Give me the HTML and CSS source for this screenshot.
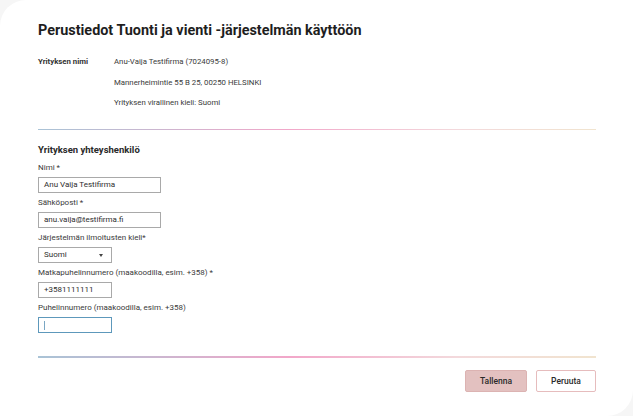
FILE: index.html
```html
<!DOCTYPE html>
<html lang="fi">
<head>
<meta charset="utf-8">
<link rel="stylesheet" href="styles.css">
</head>
<body>
<main class="card">
  <h1 class="title">Perustiedot Tuonti ja vienti -järjestelmän käyttöön</h1>
  <dl class="info">
    <dt class="info-label">Yrityksen nimi</dt>
    <dd class="info-value">Anu-Vaija Testifirma (7024095-8)</dd>
    <dd class="info-value">Mannerheimintie 55 B 25, 00250 HELSINKI</dd>
    <dd class="info-value">Yrityksen virallinen kieli: Suomi</dd>
  </dl>
  <hr class="divider divider-top">
  <h2 class="section-title">Yrityksen yhteyshenkilö</h2>
  <div class="field">
    <label class="label">Nimi *</label>
    <div class="input wide">Anu Vaija Testifirma</div>
  </div>
  <div class="field">
    <label class="label">Sähköposti *</label>
    <div class="input wide">anu.vaija@testifirma.fi</div>
  </div>
  <div class="field">
    <label class="label">Järjestelmän ilmoitusten kieli*</label>
    <div class="input select"><span>Suomi</span><span class="arrow"></span></div>
  </div>
  <div class="field">
    <label class="label">Matkapuhelinnumero (maakoodilla, esim. +358) *</label>
    <div class="input narrow">+3581111111</div>
  </div>
  <div class="field">
    <label class="label">Puhelinnumero (maakoodilla, esim. +358)</label>
    <div class="input narrow focused"><span class="caret"></span></div>
  </div>
  <hr class="divider divider-bottom">
  <div class="actions">
    <button class="btn btn-primary">Tallenna</button>
    <button class="btn btn-secondary">Peruuta</button>
  </div>
</main>
</body>
</html>
```
FILE: styles.css
```css
html, body {
  margin: 0;
  padding: 0;
  height: 100%;
}
body {
  background: #f6f6f6;
  font-family: Roboto, "Liberation Sans", Arial, sans-serif;
  color: #333;
}
.card {
  box-sizing: border-box;
  min-height: 100%;
  background: #fff;
  border-radius: 26px 0 26px 0;
  padding: 21px 37px 0 38px;
}
.title {
  margin: 0;
  font-size: 14.4px;
  line-height: 20px;
  font-weight: 700;
  color: #1e1e1e;
}
.info {
  display: grid;
  grid-template-columns: 76px 1fr;
  margin: 11px 0 0;
  font-size: 7.8px;
  line-height: 20.5px;
}
.info-label {
  grid-column: 1;
  grid-row: 1;
  font-weight: 700;
  color: #333;
}
.info-value {
  grid-column: 2;
  margin: 0;
  color: #3a3a3a;
}
.divider {
  border: 0;
  height: 1.5px;
  margin: 0;
  background: linear-gradient(90deg, #a9c3d6 0%, #f2a7c9 45%, #f3d9dc 75%, #f1e4cf 100%);
}
.divider-top {
  margin-top: 15px;
}
.section-title {
  margin: 14px 0 0;
  font-size: 9.5px;
  line-height: 12px;
  font-weight: 700;
  color: #2a2a2a;
}
.field {
  display: flex;
  flex-direction: column;
  align-items: flex-start;
  gap: 4px;
  margin-top: 7px;
}
.field + .field {
  margin-top: 5px;
}
.label {
  font-size: 8px;
  line-height: 10px;
  color: #3a3a3a;
}
.input {
  box-sizing: border-box;
  height: 16px;
  border: 1px solid #a9a9a9;
  padding: 0 5px;
  font-size: 8px;
  line-height: 14px;
  color: #2e2e2e;
  display: flex;
  align-items: center;
}
.wide { width: 123px; }
.narrow { width: 74px; }
.select {
  width: 74px;
  justify-content: space-between;
  padding-right: 8px;
}
.arrow {
  width: 0;
  height: 0;
  border-left: 2.5px solid transparent;
  border-right: 2.5px solid transparent;
  border-top: 3px solid #444;
}
.focused {
  border: 1.5px solid #5d98bb;
}
.caret {
  display: block;
  width: 1px;
  height: 9px;
  background: #7aa7c4;
}
.divider-bottom {
  margin-top: 23px;
}
.actions {
  display: flex;
  justify-content: flex-end;
  gap: 9px;
  margin-top: 12px;
}
.btn {
  box-sizing: border-box;
  height: 22px;
  border-radius: 2px;
  font-family: Roboto, "Liberation Sans", Arial, sans-serif;
  font-size: 8.5px;
  font-weight: 500;
  color: #2a2a2a;
  padding: 0;
  cursor: pointer;
}
.btn-primary {
  width: 62px;
  background: #e3c1c0;
  border: 1px solid #dcb3b2;
}
.btn-secondary {
  width: 60px;
  background: #fff;
  border: 1px solid #e6bcbd;
}
```
